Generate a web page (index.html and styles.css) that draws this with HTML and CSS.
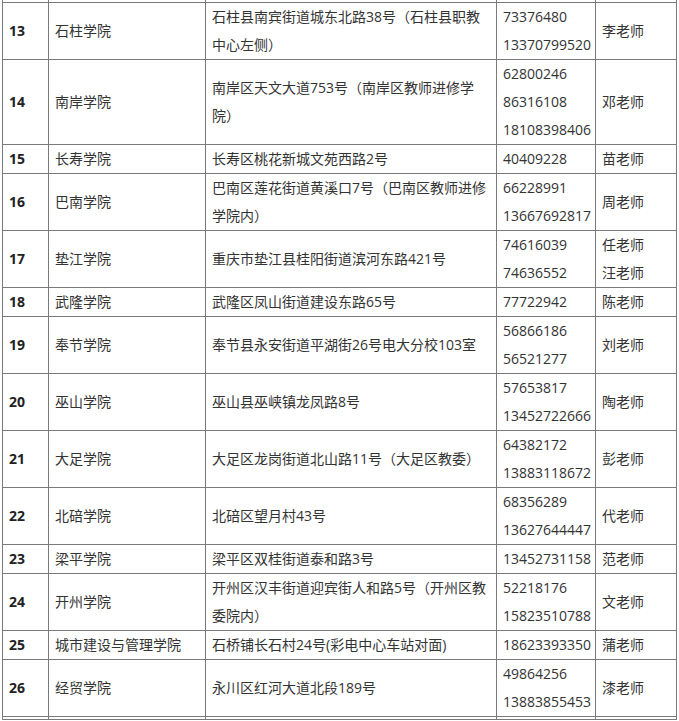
FILE: index.html
```html
<!DOCTYPE html>
<html lang="zh-CN">
<head>
<meta charset="utf-8">
<title>学院联系表</title>
<link rel="stylesheet" href="styles.css">
</head>
<body>
<table class="list">
<colgroup>
<col class="c-no"><col class="c-name"><col class="c-addr"><col class="c-tel"><col class="c-who">
</colgroup>
<tbody>
<tr class="stub"><td></td><td></td><td></td><td></td><td></td></tr>
<tr><td class="no">13</td><td>石柱学院</td><td>石柱县南宾街道城东北路38号（石柱县职教<br>中心左侧）</td><td>73376480<br>13370799520</td><td>李老师</td></tr>
<tr><td class="no">14</td><td>南岸学院</td><td>南岸区天文大道753号（南岸区教师进修学<br>院）</td><td>62800246<br>86316108<br>18108398406</td><td>邓老师</td></tr>
<tr><td class="no">15</td><td>长寿学院</td><td>长寿区桃花新城文苑西路2号</td><td>40409228</td><td>苗老师</td></tr>
<tr><td class="no">16</td><td>巴南学院</td><td>巴南区莲花街道黄溪口7号（巴南区教师进修<br>学院内）</td><td>66228991<br>13667692817</td><td>周老师</td></tr>
<tr><td class="no">17</td><td>垫江学院</td><td>重庆市垫江县桂阳街道滨河东路421号</td><td>74616039<br>74636552</td><td>任老师<br>汪老师</td></tr>
<tr><td class="no">18</td><td>武隆学院</td><td>武隆区凤山街道建设东路65号</td><td>77722942</td><td>陈老师</td></tr>
<tr><td class="no">19</td><td>奉节学院</td><td>奉节县永安街道平湖街26号电大分校103室</td><td>56866186<br>56521277</td><td>刘老师</td></tr>
<tr><td class="no">20</td><td>巫山学院</td><td>巫山县巫峡镇龙凤路8号</td><td>57653817<br>13452722666</td><td>陶老师</td></tr>
<tr><td class="no">21</td><td>大足学院</td><td>大足区龙岗街道北山路11号（大足区教委）</td><td>64382172<br>13883118672</td><td>彭老师</td></tr>
<tr><td class="no">22</td><td>北碚学院</td><td>北碚区望月村43号</td><td>68356289<br>13627644447</td><td>代老师</td></tr>
<tr><td class="no">23</td><td>梁平学院</td><td>梁平区双桂街道泰和路3号</td><td>13452731158</td><td>范老师</td></tr>
<tr><td class="no">24</td><td>开州学院</td><td>开州区汉丰街道迎宾街人和路5号（开州区教<br>委院内）</td><td>52218176<br>15823510788</td><td>文老师</td></tr>
<tr><td class="no">25</td><td>城市建设与管理学院</td><td>石桥铺长石村24号(彩电中心车站对面)</td><td>18623393350</td><td>蒲老师</td></tr>
<tr><td class="no">26</td><td>经贸学院</td><td>永川区红河大道北段189号</td><td>49864256<br>13883855453</td><td>漆老师</td></tr>
<tr class="stub"><td></td><td></td><td></td><td></td><td></td></tr>
</tbody>
</table>
</body>
</html>
```
FILE: styles.css
```css
html, body {
  margin: 0;
  padding: 0;
  background: #ffffff;
}
body {
  font-family: "Open Sans", "Noto Sans CJK SC", sans-serif;
  font-size: 14px;
  color: #333333;
  overflow: hidden;
}
.list {
  margin-left: 2px;
  width: 674px;
  table-layout: fixed;
  border-collapse: collapse;
  border-spacing: 0;
}
.c-no { width: 46px; }
.c-name { width: 157px; }
.c-addr { width: 291px; }
.c-tel { width: 99px; }
.c-who { width: 81px; }
.list td {
  border: 1px solid #7a7a7a;
  padding: 0 4px 0 6px;
  line-height: 28px;
  vertical-align: middle;
  white-space: nowrap;
  overflow: hidden;
}
.list td.no {
  font-weight: bold;
  color: #222222;
  padding-left: 6px;
}
.list tr.stub td {
  height: 2px;
  line-height: 0;
  font-size: 0;
  padding: 0;
  border-top: 0;
}
```
